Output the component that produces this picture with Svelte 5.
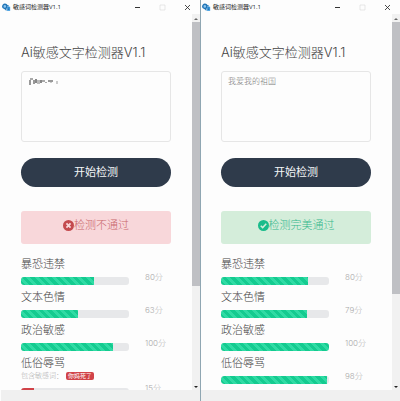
<script lang="ts">
  type Row = { label: string; score: number; width: number; word?: string };

  const windows: { id: string; text: string; masked: boolean; passed: boolean; result: string; thumb: number; rows: Row[] }[] = [
    {
      id: "fail",
      text: "",
      masked: true,
      passed: false,
      result: "检测不通过",
      thumb: 73,
      rows: [
        { label: "暴恐违禁", score: 80, width: 68 },
        { label: "文本色情", score: 63, width: 53 },
        { label: "政治敏感", score: 100, width: 85 },
        { label: "低俗辱骂", score: 15, width: 12, word: "你妈死了" },
      ],
    },
    {
      id: "pass",
      text: "我爱我的祖国",
      masked: false,
      passed: true,
      result: "检测完美通过",
      thumb: 75,
      rows: [
        { label: "暴恐违禁", score: 80, width: 81 },
        { label: "文本色情", score: 79, width: 80 },
        { label: "政治敏感", score: 100, width: 100 },
        { label: "低俗辱骂", score: 98, width: 98 },
      ],
    },
  ];
</script>

<main class="desktop">
  {#each windows as win (win.id)}
    <section class="window">
      <header class="titlebar">
        <svg class="logo" viewBox="0 0 16 16" aria-hidden="true">
          <circle cx="5" cy="6" r="3.6" fill="#8cc4ee" stroke="#2376b7" stroke-width="2.6" />
          <path d="M5 9.5 8 13M9 4.5l3 1" stroke="#2376b7" stroke-width="2" />
          <path d="M9 6.5h5.5v7.5H9z" fill="#3c9be0" />
          <path d="M10.5 9h2.5M10.5 11.5h2.5" stroke="#17568c" stroke-width="1" />
        </svg>
        <span class="caption">敏感词检测器V1.1</span>
        <div class="controls">
          <button type="button" aria-label="最小化">
            <svg viewBox="0 0 7 7"><path d="M1 3.5h5" stroke="#333" /></svg>
          </button>
          <button type="button" aria-label="最大化" disabled>
            <svg viewBox="0 0 7 7"><path d="M1 1h5v5H1z" fill="none" stroke="#ddd" stroke-width=".7" /></svg>
          </button>
          <button type="button" aria-label="关闭">
            <svg viewBox="0 0 7 7"><path d="m1 1 5 5m0-5L1 6" stroke="#222" stroke-width=".8" /></svg>
          </button>
        </div>
      </header>

      <div class="view">
        <div class="content">
          <h1>Ai敏感文字检测器V1.1</h1>

          <div class="field">
            <textarea aria-label="待检测文字" value={win.text}></textarea>
            {#if win.masked}
              <svg class="mosaic" viewBox="0 0 32 10" aria-hidden="true">
                <path d="M2 2h3v2H2z" fill="#aaa" />
                <path d="M1 4h2v5H1zM5 4h2v4H5z" fill="#999" />
                <path d="M7 3h2v4H7z" fill="#888" />
                <path d="M9 4h3v4H9z" fill="#bbb" />
                <path d="M12 4h2v3h-2z" fill="#888" />
                <path d="M14 4h3v2h-3zM17 6h2v1h-2z" fill="#aaa" />
                <path d="M20 4h5v2h-5z" fill="#999" />
                <path d="M22 6h2v1h-2zM28 5h2v3h-2z" fill="#ccc" />
              </svg>
            {/if}
          </div>

          <button class="start" type="button">开始检测</button>

          <div class="alert" class:passed={win.passed} role="status">
            <svg viewBox="0 0 16 16" aria-hidden="true">
              <circle cx="8" cy="8" r="8" fill="currentColor" />
              {#if win.passed}
                <path d="m4 8.3 2.8 2.8L12 5.6" fill="none" stroke="#d4edda" stroke-width="2.2" />
              {:else}
                <path d="m5 5 6 6m0-6-6 6" stroke="#f8d7da" stroke-width="2.6" />
              {/if}
            </svg>
            <span>{win.result}</span>
          </div>

          <div class="rows">
            {#each win.rows as row}
              <div class="row">
                <div class="name">
                  <span>{row.label}</span>
                  {#if row.word}
                    <div class="hint">包含敏感词：<mark>{row.word}</mark></div>
                  {/if}
                </div>
                <div class="track" role="progressbar" aria-label={row.label} aria-valuenow={row.score}>
                  <div class="fill" class:danger={row.word} style="width: {row.width}%"></div>
                </div>
                <span class="score">{row.score}分</span>
              </div>
            {/each}
          </div>
        </div>

        <div class="scrollbar" aria-hidden="true">
          <svg viewBox="0 0 8 6"><path d="m4 2 2 2H2z" fill="#666" /></svg>
          <div class="lane">
            <div class="thumb" style="height: {win.thumb}%"></div>
          </div>
          <svg viewBox="0 0 8 6"><path d="m4 4 2-2H2z" fill="#222" /></svg>
        </div>
      </div>

      <footer></footer>
    </section>
  {/each}
</main>

<style>
  :global(body) {
    margin: 0;
    background: #fdfdfd;
  }

  .desktop {
    display: grid;
    grid-template-columns: 1fr 1fr;
    height: 100vh;
    overflow: hidden;
    font-family: Inter, "Noto Sans CJK SC", sans-serif;
    font-weight: 300;
    color: #444;
  }

  .window {
    display: flex;
    flex-direction: column;
    min-width: 0;
    min-height: 0;
    background: #fdfdfd;
    border-left: 1px solid #fdfdfd;
  }

  .window + .window {
    border-left-color: #8fa6b2;
  }

  button {
    font: inherit;
    border: 0;
    cursor: pointer;
  }

  .titlebar {
    display: flex;
    align-items: center;
    gap: 2px;
    height: 14px;
    flex: none;
    padding-left: 1px;
  }

  .logo {
    width: 9px;
    height: 9px;
  }

  .caption {
    font-family: "Open Sans", "Noto Sans CJK SC", sans-serif;
    font-size: 6px;
    font-weight: 400;
    line-height: 14px;
    color: #222;
    white-space: nowrap;
  }

  .controls {
    display: flex;
    gap: 18px;
    margin-left: auto;
    padding-right: 9px;
  }

  .controls button {
    display: flex;
    width: 7px;
    padding: 0;
    background: none;
  }

  .controls svg {
    width: 7px;
    height: 7px;
  }

  .view {
    display: flex;
    flex: 1;
    min-height: 0;
    overflow: hidden;
  }

  .content {
    flex: 1;
    min-width: 0;
    padding: 29px 21px 0 20px;
  }

  h1 {
    margin: 0 0 10px;
    font-size: 13px;
    font-weight: 300;
    line-height: 18px;
    white-space: nowrap;
  }

  .field {
    position: relative;
    display: flex;
  }

  textarea {
    box-sizing: border-box;
    width: 100%;
    height: 71px;
    padding: 3px 6px;
    border: 1px solid #e6e6e6;
    border-radius: 3px;
    background: #fdfdfd;
    font: inherit;
    font-size: 8px;
    line-height: 12px;
    color: #777;
    resize: none;
  }

  .mosaic {
    position: absolute;
    top: 5px;
    left: 7px;
    width: 32px;
    height: 10px;
  }

  .start {
    display: block;
    width: 100%;
    margin: 16px 0 24px;
    padding: 0;
    border-radius: 15px;
    background: #2f3b4b;
    font-size: 11px;
    font-weight: 400;
    line-height: 29px;
    color: #f4f6f8;
  }

  .alert {
    display: flex;
    align-items: center;
    justify-content: center;
    margin-bottom: 11px;
    padding: 5px 0 10px;
    border-radius: 3px;
    background: #f8d7da;
    font-size: 11px;
    line-height: 18px;
    color: #c44a4e;
  }

  .alert span {
    color: #c9666a;
  }

  .alert svg {
    width: 11px;
    height: 11px;
  }

  .alert.passed {
    background: #d4edda;
    color: #1abc8b;
  }

  .alert.passed span {
    color: #35b88c;
  }

  .rows {
    display: grid;
    gap: 3px;
  }

  .row {
    display: grid;
    grid-template-columns: 72% 1fr;
    column-gap: 16px;
    row-gap: 4px;
  }

  .name {
    font-size: 11px;
    line-height: 18px;
    white-space: nowrap;
  }

  .name > span {
    display: block;
  }

  .hint {
    display: flex;
    align-items: center;
    padding-bottom: 4px;
    font-size: 7px;
    line-height: 8px;
    color: #aaa;
  }

  mark {
    margin-left: 3px;
    padding: 0 2px;
    border-radius: 2px;
    background: #d14348;
    font-size: 6px;
    font-weight: 400;
    color: #fff;
  }

  .track {
    grid-row: 2;
    height: 8px;
    border-radius: 3px;
    overflow: hidden;
    background: #e7e8ea;
  }

  .fill {
    height: 100%;
    background: repeating-linear-gradient(45deg, #14cb90 0 3px, #2fdba4 3px 6px);
  }

  .fill.danger {
    background: #d14348;
  }

  .row:last-child .fill:not(.danger) {
    border-radius: 3px 0 0 3px;
  }

  .score {
    grid-row: 1 / 3;
    grid-column: 2;
    align-self: end;
    font-size: 8px;
    line-height: 16px;
    color: #aaa;
    white-space: nowrap;
  }

  .scrollbar {
    display: flex;
    flex-direction: column;
    width: 8px;
    padding-top: 2px;
    background: #f1f1f1;
  }

  .scrollbar svg {
    width: 8px;
    height: 6px;
  }

  .lane {
    flex: 1;
  }

  .thumb {
    background: #bfc0c4;
  }

  footer {
    flex: none;
    height: 11px;
    background: #f0f0f0;
  }
</style>
